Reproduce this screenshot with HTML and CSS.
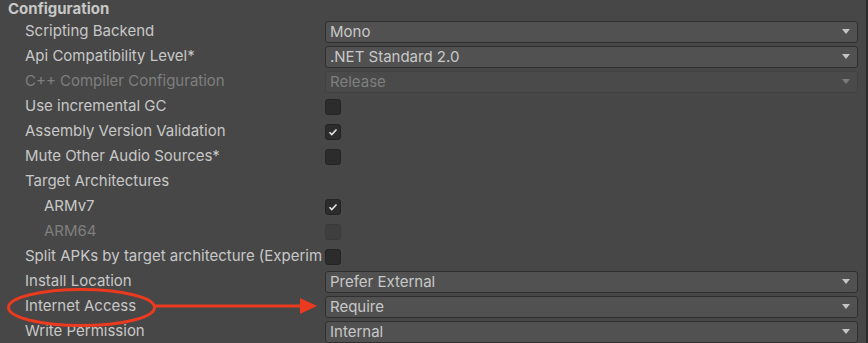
FILE: index.html
```html
<!DOCTYPE html>
<html lang="en">
<head>
  <meta charset="UTF-8" />
  <title>Player Settings - Configuration</title>
  <link rel="stylesheet" href="styles.css">
</head>
<body>
  <div class="inspector">
    <div class="section-title">Configuration</div>

    <div class="row">
      <div class="label">Scripting Backend</div>
      <div class="popup"><span>Mono</span><i class="caret"></i></div>
    </div>
    <div class="row">
      <div class="label">Api Compatibility Level*</div>
      <div class="popup"><span>.NET Standard 2.0</span><i class="caret"></i></div>
    </div>
    <div class="row disabled">
      <div class="label">C++ Compiler Configuration</div>
      <div class="popup"><span>Release</span><i class="caret"></i></div>
    </div>
    <div class="row">
      <div class="label">Use incremental GC</div>
      <div class="toggle"></div>
    </div>
    <div class="row">
      <div class="label">Assembly Version Validation</div>
      <div class="toggle checked"><svg viewBox="0 0 16 16"><path d="M4 8.3l2.6 2.6L12 5.2" /></svg></div>
    </div>
    <div class="row">
      <div class="label">Mute Other Audio Sources*</div>
      <div class="toggle"></div>
    </div>
    <div class="row">
      <div class="label">Target Architectures</div>
    </div>
    <div class="row">
      <div class="label indent">ARMv7</div>
      <div class="toggle checked"><svg viewBox="0 0 16 16"><path d="M4 8.3l2.6 2.6L12 5.2" /></svg></div>
    </div>
    <div class="row disabled">
      <div class="label indent">ARM64</div>
      <div class="toggle"></div>
    </div>
    <div class="row">
      <div class="label">Split APKs by target architecture (Experim</div>
      <div class="toggle"></div>
    </div>
    <div class="row">
      <div class="label">Install Location</div>
      <div class="popup"><span>Prefer External</span><i class="caret"></i></div>
    </div>
    <div class="row">
      <div class="label">Internet Access</div>
      <div class="popup"><span>Require</span><i class="caret"></i></div>
    </div>
    <div class="row">
      <div class="label">Write Permission</div>
      <div class="popup"><span>Internal</span><i class="caret"></i></div>
    </div>

    <!-- annotation drawn over the screenshot -->
    <svg class="markup" width="868" height="343" viewBox="0 0 868 343">
      <ellipse cx="81.5" cy="307.5" rx="73" ry="18" />
      <line x1="155" y1="306" x2="302" y2="306" />
      <polygon points="300,298 317,306 300,314" />
    </svg>
  </div>
</body>
</html>
```

FILE: styles.css
```css
body {
  margin: 0;
  background: #474747;
  font-family: Inter, "Noto Sans", sans-serif;
  font-size: 15px;
  color: #c8c8c8;
}
.inspector {
  position: relative;
  width: 866px;
  height: 343px;
  overflow: hidden;
  border-right: 2px solid #2b2b2b;
}
.section-title {
  height: 19px;
  line-height: 18px;
  padding-left: 8px;
  font-weight: bold;
}
.row {
  display: flex;
  align-items: center;
  height: 25px;
  padding-left: 25px;
  padding-right: 8px;
  line-height: 18px;
}
.label {
  width: 300px;
  flex: none;
  white-space: nowrap;
  overflow: hidden;
  margin-top: -1px;
}
.label.indent {
  padding-left: 19px;
  width: 281px;
}
.row.disabled {
  color: #7f7f7f;
}
.popup {
  flex: 1;
  height: 20px;
  display: flex;
  align-items: center;
  justify-content: space-between;
  padding: 0 7px 0 4px;
  background: #515151;
  border: 1px solid #2f2f2f;
  border-radius: 3px;
}
.caret {
  width: 0;
  height: 0;
  border-left: 4.5px solid transparent;
  border-right: 4.5px solid transparent;
  border-top: 5px solid #c4c4c4;
}
.row.disabled .popup {
  background: #4a4a4a;
  border-color: #414141;
}
.row.disabled .caret {
  border-top-color: #7a7a7a;
}
.toggle {
  width: 14px;
  height: 14px;
  background: #2c2c2c;
  border: 1px solid #232323;
  border-radius: 3px;
}
.toggle svg {
  display: block;
  width: 14px;
  height: 14px;
}
.toggle path {
  fill: none;
  stroke: #e4e4e4;
  stroke-width: 1.8;
}
.row.disabled .toggle {
  background: #3f3f3f;
  border-color: #3a3a3a;
}
.markup {
  position: absolute;
  left: 0;
  top: 0;
  pointer-events: none;
}
.markup ellipse,
.markup line {
  fill: none;
  stroke: #ea3a1f;
  stroke-width: 3;
}
.markup polygon {
  fill: #ea3a1f;
}
```
